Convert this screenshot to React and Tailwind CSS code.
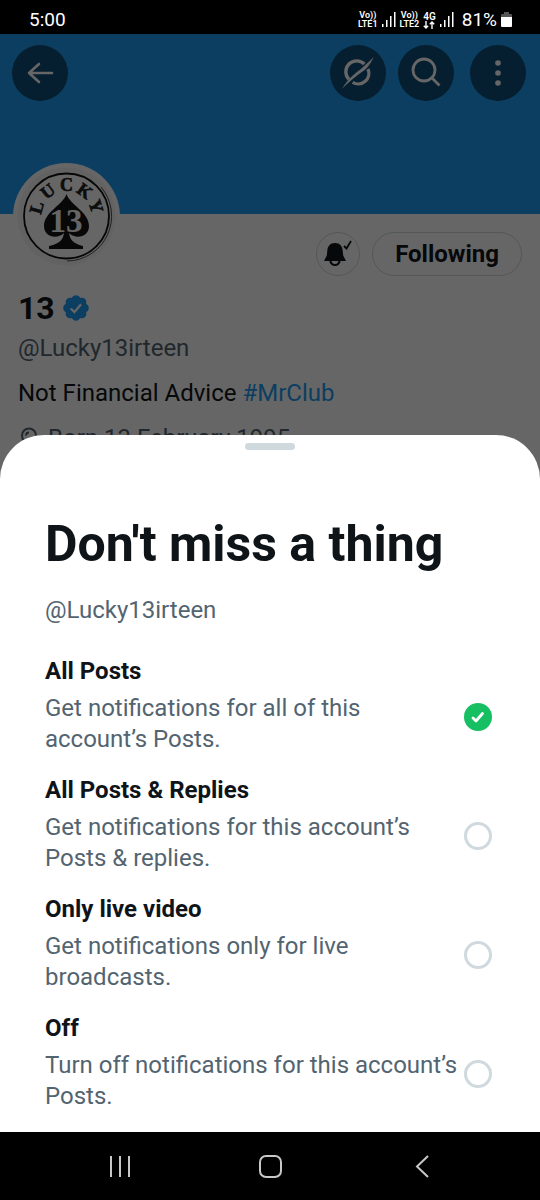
import React, { useState } from 'react';

const OPTIONS = [
  { id: 'all', title: 'All Posts', text: 'Get notifications for all of this account’s Posts.' },
  { id: 'replies', title: 'All Posts & Replies', text: 'Get notifications for this account’s Posts & replies.' },
  { id: 'live', title: 'Only live video', text: 'Get notifications only for live broadcasts.' },
  { id: 'off', title: 'Off', text: 'Turn off notifications for this account’s Posts.' },
];

const LETTERS = [
  { char: 'L', angle: -74 },
  { char: 'U', angle: -37 },
  { char: 'C', angle: 0 },
  { char: 'K', angle: 36 },
  { char: 'Y', angle: 72 },
];

function Signal() {
  return (
    <svg className="h-4 w-3.5" viewBox="0 0 14 16" fill="white" aria-hidden="true">
      <rect x="0" y="12" width="1.5" height="3" />
      <rect x="4" y="8" width="1.5" height="7" />
      <rect x="8" y="4" width="1.5" height="11" />
      <rect x="12" y="0" width="1.5" height="15" />
    </svg>
  );
}

function Volte({ sim }) {
  return (
    <div className="flex flex-col items-center text-[9px] leading-[9px] font-semibold">
      <span>Vo))</span>
      <span>LTE{sim}</span>
    </div>
  );
}

function StatusBar() {
  return (
    <div className="flex h-[34px] shrink-0 items-center justify-between bg-black pt-1.5 pr-7 pl-[29px] text-white">
      <span className="text-[19px] leading-6">5:00</span>
      <div className="flex items-center gap-1">
        <Volte sim={1} />
        <Signal />
        <Volte sim={2} />
        <div className="flex flex-col items-center text-[10px] leading-[9px] font-semibold">
          <span>4G</span>
          <svg className="h-2 w-3" viewBox="0 0 12 8" fill="none" stroke="white" strokeWidth="1.4" aria-hidden="true">
            <path d="M3 0v7M.8 4.8 3 7l2.2-2.2M9 8V1M6.8 3.2 9 1l2.2 2.2" />
          </svg>
        </div>
        <Signal />
        <span className="pl-1 text-[19px] leading-6">81%</span>
        <svg className="h-4 w-[11px]" viewBox="0 0 11 16" aria-hidden="true">
          <path d="M3 0h5v2h2q1 0 1 1v3H0V3q0-1 1-1h2z" fill="#555" />
          <path d="M0 5h11v9q0 1-1 1H1q-1 0-1-1z" fill="white" />
        </svg>
      </div>
    </div>
  );
}

function RoundButton({ label, children }) {
  return (
    <button type="button" aria-label={label} className="flex size-14 items-center justify-center rounded-full bg-black/50 text-white">
      {children}
    </button>
  );
}

function Avatar() {
  return (
    <svg className="-mt-[51px] size-[107px]" viewBox="0 0 107 107" role="img" aria-label="Lucky 13">
      <circle cx="53.5" cy="53.5" r="53.5" fill="white" />
      <circle cx="53.5" cy="53.5" r="49" fill="#f6f6f6" />
      <circle cx="53.5" cy="53" r="42.5" fill="white" stroke="#111" strokeWidth="1.8" />
      <path d="M88 24A45 45 0 0 1 54 98" fill="none" stroke="#222" strokeWidth="0.8" />
      <g fontFamily="Liberation Serif, serif" fontWeight="700" textAnchor="middle">
        <g fontSize="18" fill="#222" stroke="#222" strokeWidth="0.6">
          {LETTERS.map((l) => (
            <text key={l.char} x="53.5" y="28" transform={`rotate(${l.angle} 53.5 53)`}>{l.char}</text>
          ))}
        </g>
        <path d="M53.5 31C57 42 76 49 76 63C76 74 63 77 56 70C57 78 62 81 70 83V86H36V83C45 81 50 78 51 70C44 77 31 74 31 63C31 49 50 42 53.5 31Z" fill="#151515" />
        <text x="53" y="69" fontSize="33" fill="white" stroke="#151515" strokeWidth="1" paintOrder="stroke">13</text>
      </g>
    </svg>
  );
}

function Profile() {
  return (
    <div className="col-start-1 row-start-1 bg-white text-[24px] leading-[30px] text-[#0f1419]">
      <div className="flex h-[180px] items-start justify-between bg-[#1d9bf0] pt-[11px] pr-3.5 pl-3">
        <RoundButton label="Back">
          <svg className="size-8" viewBox="0 0 32 32" fill="none" stroke="currentColor" strokeWidth="2.6" strokeLinecap="round" strokeLinejoin="round">
            <path d="M28 16H5M15 7l-10 9 10 9" />
          </svg>
        </RoundButton>
        <div className="flex gap-4">
          <div className="flex gap-3">
            <RoundButton label="Grok">
              <svg className="size-8" viewBox="0 0 96 96" fill="none" stroke="currentColor" strokeWidth="10">
                <path d="M21 67A32 32 0 0 1 67 21" />
                <path d="M78 36A32 32 0 0 1 32 76" />
                <path d="M0 95C18 68 32 54 56 37L96 0C82 24 76 34 64 42C44 56 26 70 0 95Z" fill="currentColor" stroke="none" />
              </svg>
            </RoundButton>
            <RoundButton label="Search">
              <svg className="size-8" viewBox="0 0 32 32" fill="none" stroke="currentColor" strokeWidth="2.8">
                <circle cx="14" cy="13" r="11" />
                <path d="m21.5 20.5 8 8" />
              </svg>
            </RoundButton>
          </div>
          <RoundButton label="More">
            <svg className="size-8" viewBox="0 0 32 32" fill="currentColor">
              <circle cx="16" cy="6" r="2.8" />
              <circle cx="16" cy="16" r="2.8" />
              <circle cx="16" cy="26" r="2.8" />
            </svg>
          </RoundButton>
        </div>
      </div>

      <div className="flex items-start justify-between pr-[18px] pl-[13px]">
        <Avatar />
        <div className="mt-[18px] flex gap-3">
          <button type="button" aria-label="Notifications" className="flex size-11 items-center justify-center rounded-full border border-[#cfd9de]">
            <svg className="size-7" viewBox="0 0 28 28" fill="none" stroke="currentColor">
              <path d="M11 3C6 3 3.5 6.5 3.3 11L2.8 15.5 0 21H22L19.2 15.5 18.7 11C18.5 6.5 16 3 11 3Z" fill="currentColor" stroke="none" />
              <path d="M6.5 20.5a4.5 4.500 0 0 0 9 0" strokeWidth="2.2" />
              <path d="m20 6 2.5 2.5L27 1" strokeWidth="1.8" />
            </svg>
          </button>
          <button type="button" className="h-11 rounded-full border border-[#cfd9de] px-[22px] font-bold">Following</button>
        </div>
      </div>

      <div className="flex flex-col px-[18px]">
        <div className="mt-3 flex items-center gap-1.5">
          <h2 className="text-[32px] leading-10 font-bold">13</h2>
          <svg className="size-[30px]" viewBox="0 0 24 24" fill="#1d9bf0" role="img" aria-label="Verified account">
            <path d="M22.25 12c0-1.43-.88-2.67-2.19-3.34.46-1.39.2-2.9-.81-3.91s-2.52-1.27-3.91-.81c-.66-1.31-1.91-2.19-3.34-2.19s-2.67.88-3.33 2.19c-1.4-.46-2.91-.2-3.92.81s-1.26 2.52-.8 3.91c-1.31.67-2.2 1.91-2.2 3.34s.89 2.67 2.2 3.34c-.46 1.39-.21 2.9.8 3.91s2.52 1.26 3.91.81c.67 1.31 1.91 2.19 3.34 2.19s2.68-.88 3.34-2.19c1.39.45 2.9.2 3.91-.81s1.27-2.52.81-3.91c1.31-.67 2.19-1.91 2.19-3.34z" />
            <path d="m7.8 12.4 2.9 2.9 5.3-6.3" fill="none" stroke="white" strokeWidth="1.8" />
          </svg>
        </div>
        <p className="mt-[5px] text-[#536471]">@Lucky13irteen</p>
        <p className="mt-[15px]">
          Not Financial Advice <a href="#mrclub" className="text-[#1d9bf0]">#MrClub</a>
        </p>
        <p className="mt-[15px] flex items-center gap-2 text-[#536471]">
          <svg className="size-[22px]" viewBox="0 0 22 22" fill="none" stroke="currentColor" strokeWidth="2" aria-hidden="true">
            <path d="M11 1.5a7 7 0 0 1 7 7c0 4-3 8-7 8s-7-4-7-8a7 7 0 0 1 7-7ZM8 8.5a3 3 0 0 1 3-3M11 17l-2 4h4z" />
          </svg>
          Born 13 February 1995
        </p>
      </div>
    </div>
  );
}

function Option({ option, checked, onSelect }) {
  return (
    <label className="flex items-end justify-between gap-1 leading-[31px]">
      <span className="flex flex-col gap-1.5">
        <span className="font-bold text-[#0f1419]">{option.title}</span>
        <span className="text-[#536471]">{option.text}</span>
      </span>
      <span className="mb-6 grid shrink-0">
        <input
          type="radio"
          name="notifications"
          checked={checked}
          onChange={() => onSelect(option.id)}
          className="col-start-1 row-start-1 size-7 appearance-none rounded-full border-3 border-[#cfd9de] checked:border-[#17bf63] checked:bg-[#17bf63]"
        />
        {checked && (
          <svg className="pointer-events-none col-start-1 row-start-1 size-7" viewBox="0 0 28 28" fill="none" stroke="white" strokeWidth="2.8" strokeLinecap="round" strokeLinejoin="round">
            <path d="m9 15 3 3L18.5 10.5" />
          </svg>
        )}
      </span>
    </label>
  );
}

function Sheet() {
  const [selected, setSelected] = useState('all');

  return (
    <section className="flex flex-col rounded-t-[44px] bg-white pt-2 text-[24px]">
      <div className="h-[7px] w-[50px] self-center rounded-full bg-[#cfd9de]" />
      <div className="pt-16 pr-12 pb-5 pl-[45px]">
        <h1 className="text-[50px] leading-[60px] font-bold text-[#0f1419]">Don't miss a thing</h1>
        <p className="mt-[21px] leading-[31px] text-[#536471]">@Lucky13irteen</p>
        <div className="mt-[30px] flex flex-col gap-5">
          {OPTIONS.map((o) => (
            <Option key={o.id} option={o} checked={o.id === selected} onSelect={setSelected} />
          ))}
        </div>
      </div>
    </section>
  );
}

function NavBar() {
  return (
    <nav className="flex h-[68px] shrink-0 items-center justify-between bg-black px-[103px] text-[#c8c8c8]">
      <button type="button" aria-label="Recent apps">
        <svg className="size-8" viewBox="0 0 32 32" fill="none" stroke="currentColor" strokeWidth="2">
          <path d="M8 6v21M17 6v21M26 6v21" />
        </svg>
      </button>
      <button type="button" aria-label="Home">
        <svg className="size-8" viewBox="0 0 32 32" fill="none" stroke="currentColor" strokeWidth="2">
          <rect x="6" y="6" width="21" height="21" rx="6" />
        </svg>
      </button>
      <button type="button" aria-label="Back">
        <svg className="size-8" viewBox="0 0 32 32" fill="none" stroke="currentColor" strokeWidth="2">
          <path d="M23 6 12 16.5 23 27" />
        </svg>
      </button>
    </nav>
  );
}

function App() {
  return (
    <div className="flex min-h-screen flex-col bg-white font-['Roboto',sans-serif]">
      <StatusBar />
      <main className="grid flex-1">
        <Profile />
        {/* Scrim with the sheet at its foot */}
        <div className="z-10 col-start-1 row-start-1 flex flex-col justify-end bg-black/60">
          <Sheet />
        </div>
      </main>
      <NavBar />
    </div>
  );
}

export default App;
